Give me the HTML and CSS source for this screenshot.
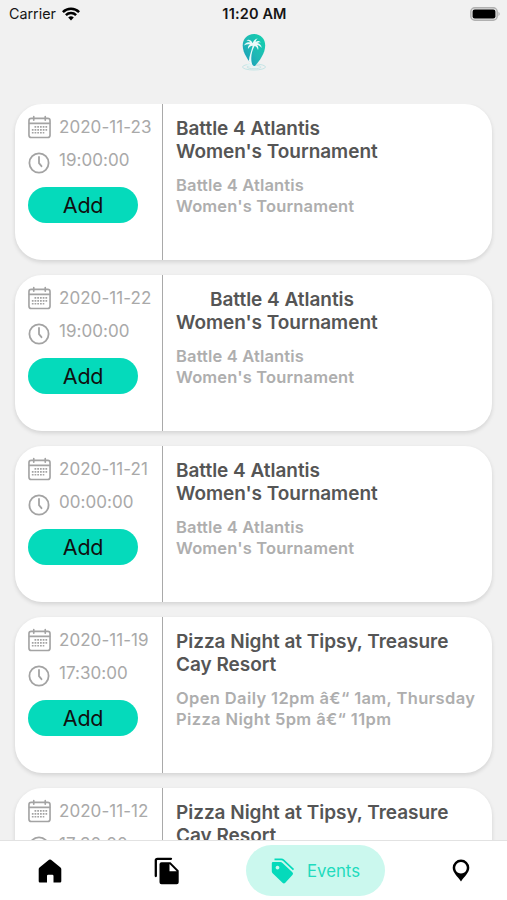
FILE: index.html
```html
<!DOCTYPE html>
<html lang="en">
<head>
<meta charset="utf-8">
<title>Events</title>
<link rel="stylesheet" href="styles.css">
</head>
<body>
<svg width="0" height="0" class="defs" aria-hidden="true">
  <symbol id="calendar" viewBox="0 0 24 24">
    <g fill="none" stroke="currentColor" stroke-width="1.7" stroke-linecap="round">
      <rect x="1" y="3" width="22" height="20" rx="2.4"/>
      <path d="M1.500 8.200h21M6 1v4M18 1v4"/>
    </g>
    <path d="M6.800 11.800H20M4 14.900h16M4 18h13" fill="none" stroke="currentColor" stroke-width="1.800" stroke-dasharray="1.800 1.050"/>
  </symbol>
  <symbol id="clock" viewBox="0 0 22 22">
    <g fill="none" stroke="currentColor" stroke-width="1.800" stroke-linecap="round" stroke-linejoin="round">
      <circle cx="11" cy="11" r="9.600"/>
      <path d="M11 5v6.200l2.500 3"/>
    </g>
  </symbol>
</svg>
<div class="screen">
  <header class="status">
    <div class="carrier"><span>Carrier</span>
      <svg width="18" height="14" viewBox="0 0 18 14"><g fill="none" stroke="#000" stroke-width="2.5"><path d="M.9 5.1a11.5 11.5 0 0 1 16.2 0"/><path d="M3.9 8.2a7.2 7.2 0 0 1 10.2 0"/></g><path d="M6.2 10.5a4 4 0 0 1 5.6 0L9 13.5z"/></svg>
    </div>
    <div class="time">11:20 AM</div>
    <svg class="battery" width="31" height="14" viewBox="0 0 31 14"><rect x=".8" y=".8" width="26.4" height="12.4" rx="4" fill="#e2e2e2" stroke="#b0b0b0" stroke-width="1.4"/><rect x="2.6" y="2.6" width="22.8" height="8.8" rx="2.2"/><path d="M28.5 4.8q2.4 2.2 0 4.4z" fill="#aaa"/></svg>
  </header>
  <div class="brand">
    <svg width="26" height="40" viewBox="0 0 26 40">
      <defs><linearGradient id="pin" x1="1" y1="0" x2="0" y2="1"><stop offset="0" stop-color="#12d3ad"/><stop offset=".55" stop-color="#20b7b5"/><stop offset="1" stop-color="#1796bb"/></linearGradient></defs>
      <g fill="none" stroke="#c5e5e6" stroke-width="1"><ellipse cx="13" cy="34" rx="11.5" ry="3"/><ellipse cx="13" cy="34" rx="7" ry="1.7"/></g>
      <path d="M13 1C6 1 1.7 6.2 1.7 12.5 1.7 20 7.5 28 11.8 32.4q1.3 1 2.6 0C18.5 28 24.2 20 24.2 12.5 24.2 6.2 20 1 13 1z" fill="url(#pin)"/>
      <path d="M11.7 10.2C9.8 6.4 7 6.2 5.4 7.4c2-.1 3.2.7 4 2C6.3 8.5 4 10 3 12.6c2-1.3 4-1.6 6-1.2-1.6 1-2.3 2.5-2 4.5 1-1.8 2.6-3 4.7-3.2C10.2 19 7.8 24 8 28c.8 2.3 2 3.8 3.6 4.6C9 26 10.5 18 13.6 12.9c1.9.6 2.8 2.1 3.4 4.1.7-2.1.2-3.700-.9-4.900 1.700.3 3.200 1.200 4.500 2.900-.1-2.600-1.800-4.500-4.400-4.900 1.300-.9 2.500-1 4-.4-1.700-2-3.900-2.200-5.500-.7.100-1.500.8-2.600 2-3.500-2.400.2-4 1.900-5 4.700z" fill="#fff" opacity=".92"/>
      <path d="M5 32q4-2 7 .5t9 .5q-5 4-16-1z" fill="#e3f5f5"/>
    </svg>
  </div>
  <main class="list">
    <article class="card">
      <div class="when">
        <div class="row date"><svg class="cal"><use href="#calendar"/></svg><span>2020-11-23</span></div>
        <div class="row hour"><svg class="clk"><use href="#clock"/></svg><span>19:00:00</span></div>
        <button class="add">Add</button>
      </div>
      <div class="info"><h2>Battle 4 Atlantis<br>Women's Tournament</h2><p>Battle 4 Atlantis<br>Women's Tournament</p></div>
    </article>
    <article class="card">
      <div class="when">
        <div class="row date"><svg class="cal"><use href="#calendar"/></svg><span>2020-11-22</span></div>
        <div class="row hour"><svg class="clk"><use href="#clock"/></svg><span>19:00:00</span></div>
        <button class="add">Add</button>
      </div>
      <div class="info"><h2 class="indent">Battle 4 Atlantis<br>Women's Tournament</h2><p>Battle 4 Atlantis<br>Women's Tournament</p></div>
    </article>
    <article class="card">
      <div class="when">
        <div class="row date"><svg class="cal"><use href="#calendar"/></svg><span>2020-11-21</span></div>
        <div class="row hour"><svg class="clk"><use href="#clock"/></svg><span>00:00:00</span></div>
        <button class="add">Add</button>
      </div>
      <div class="info"><h2>Battle 4 Atlantis<br>Women's Tournament</h2><p>Battle 4 Atlantis<br>Women's Tournament</p></div>
    </article>
    <article class="card">
      <div class="when">
        <div class="row date"><svg class="cal"><use href="#calendar"/></svg><span>2020-11-19</span></div>
        <div class="row hour"><svg class="clk"><use href="#clock"/></svg><span>17:30:00</span></div>
        <button class="add">Add</button>
      </div>
      <div class="info"><h2>Pizza Night at Tipsy, Treasure<br>Cay Resort</h2><p class="hours">Open Daily 12pm â€“ 1am, Thursday<br>Pizza Night 5pm â€“ 11pm</p></div>
    </article>
    <article class="card">
      <div class="when">
        <div class="row date"><svg class="cal"><use href="#calendar"/></svg><span>2020-11-12</span></div>
        <div class="row hour"><svg class="clk"><use href="#clock"/></svg><span>17:30:00</span></div>
      </div>
      <div class="info"><h2>Pizza Night at Tipsy, Treasure<br>Cay Resort</h2></div>
    </article>
  </main>
  <nav class="tabs">
    <a class="tab home"><svg width="24" height="24" viewBox="0 0 24 24"><path d="M11 .8q1-.8 2 0l9.5 7.700q.8.700.8 1.700v12q0 1.200-1.200 1.200H15.500v-6.500q0-1.200-1.200-1.200H10.200q-1.200 0-1.200 1.200v6.500H1.900Q.7 23.400.7 22.200v-12q0-1 .8-1.700z"/></svg></a>
    <a class="tab docs"><svg width="26" height="28" viewBox="0 0 26 28"><path d="M1.8 19V3.500q0-1.700 1.700-1.700H17" fill="none" stroke="#000" stroke-width="2.300" stroke-linecap="round"/><path fill-rule="evenodd" d="M7.500 5.200H16.500L24.700 13.400V25.200q0 2-2 2H7.500q-2 0-2-2v-18q0-2 2-2zM15.500 7v7.200h7.200z"/></svg></a>
    <a class="tab active"><svg width="24" height="26" viewBox="0 0 24 26"><path d="M3.500 1.400H10.300q1.300 0 2.400 1L22.500 11.700" fill="none" stroke="#05dabb" stroke-width="1.700"/><path fill="#05dabb" fill-rule="evenodd" d="M2 4H9.300q1.200 0 2.200.9L21.400 14.200q1.400 1.400 0 2.800L14.300 24.800q-1.400 1.200-2.800 0L1.600 15.200Q.8 14.400.8 13.200V5.200Q.8 4 2 4zM6.500 7.700a1.900 1.900 0 1 0 .01 0z"/></svg><span>Events</span></a>
    <a class="tab place"><svg width="18" height="23" viewBox="0 0 18 23"><path fill-rule="evenodd" d="M9 .5A8.300 8.300 0 0 0 .7 8.800C.7 13.500 5.500 17.500 9 22.500c3.500-5 8.300-9 8.300-13.700A8.300 8.300 0 0 0 9 .5zM9 3a5.800 5.800 0 1 1-.01 0z"/></svg></a>
  </nav>
</div>
</body>
</html>
```
FILE: styles.css
```css
* { box-sizing: border-box; }
body {
  margin: 0;
  font-family: Inter, "Liberation Sans", sans-serif;
  background: #f1f1f1;
}
.defs { display: block; height: 0; }
.screen {
  width: 507px;
  height: 900px;
  display: flex;
  flex-direction: column;
  overflow: hidden;
}
.status {
  height: 27px;
  display: grid;
  grid-template-columns: 1fr auto 1fr;
  align-items: center;
  padding: 0 6px 0 9px;
  color: #151515;
}
.carrier { display: flex; align-items: center; gap: 6px; font-size: 14.3px; line-height: 26px; }
.time { margin-right: 1px; font-size: 14.5px; font-weight: 600; letter-spacing: .15px; }
.battery { justify-self: end; }
.brand { height: 77px; padding-top: 6px; text-align: center; }
.list {
  flex: 1;
  min-height: 0;
  overflow: hidden;
  padding: 0 15px;
}
.card {
  display: flex;
  height: 156px;
  margin-bottom: 15px;
  background: #fff;
  border-radius: 27px;
  box-shadow: 0 2px 4px rgba(0, 0, 0, .13);
}
.when {
  width: 148px;
  padding: 11px 0 0 13px;
  border-right: 1px solid #a9a9a9;
}
.row { display: flex; color: #a9a9a9; font-size: 17px; line-height: 24px; letter-spacing: .05px; white-space: nowrap; }
.date { height: 35px; }
.hour { height: 37px; }
.cal { width: 23px; height: 24px; margin-right: 8px; color: #a3a3a3; }
.clk { width: 22px; height: 22px; margin: 2px 9px 0 0; color: #a3a3a3; }
.hour span { margin-top: -2px; }
.add {
  display: block;
  width: 110px;
  height: 36px;
  padding: 0;
  border: 0;
  border-radius: 18px;
  background: #05dabb;
  color: #101010;
  font: 400 21.5px/37px Inter, "Liberation Sans", sans-serif;
  letter-spacing: -.3px;
}
.info { padding: 13px 0 0 13px; white-space: nowrap; }
h2 { margin: 0; font-size: 19px; line-height: 23px; font-weight: 600; letter-spacing: -.03px; color: #555; }
.indent { text-indent: 34px; }
p { margin: 12px 0 0; font-size: 16.5px; line-height: 20.5px; font-weight: 600; letter-spacing: .15px; color: #aeaeae; }
.hours { letter-spacing: .37px; }
.tabs {
  height: 60px;
  display: grid;
  grid-template-columns: 100px 133px 152px 1fr;
  align-items: center;
  background: #fff;
  border-top: 1px solid #e2e2e2;
}
.tab { display: flex; align-items: center; justify-content: center; }
.active {
  justify-self: end;
  width: 139px;
  height: 51px;
  gap: 12px;
  border-radius: 26px;
  background: #cbf8ee;
  color: #20dbbd;
  font-size: 16.8px;
}
.place { padding-left: 30px; }
```
